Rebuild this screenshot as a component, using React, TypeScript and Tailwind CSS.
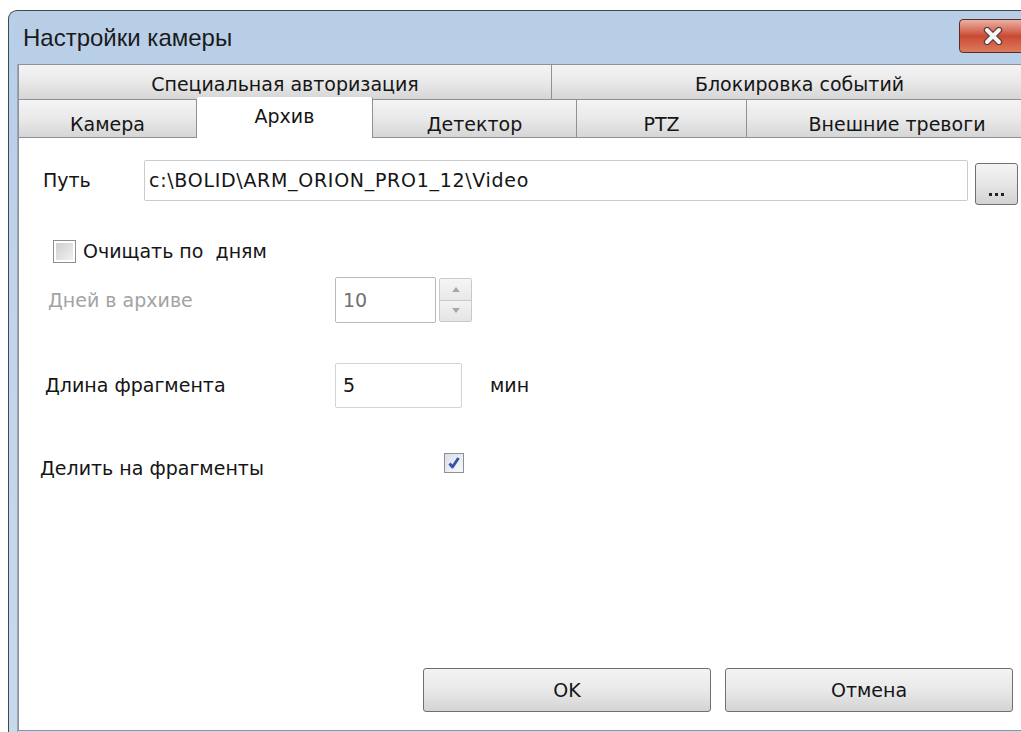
import React from "react";

function BackTab({ label, className }: { label: string; className: string }) {
  return (
    <div
      className={`flex items-center justify-center pt-[5px] border border-[#8e9198] bg-gradient-to-b from-[#f4f4f4] via-[#e9e9e9] to-[#d6d6d6] ${className}`}
    >
      {label}
    </div>
  );
}

function FrontTab({ label, className }: { label: string; className: string }) {
  return (
    <div
      className={`flex items-center justify-center pt-[11px] border-r border-[#8e9198] bg-gradient-to-b from-[#f4f4f4] via-[#e9e9e9] to-[#d6d6d6] ${className}`}
    >
      {label}
    </div>
  );
}

function Checkbox({ checked }: { checked?: boolean }) {
  if (checked) {
    return (
      <div className="w-[20px] h-[20px] border border-[#8f8f8f] bg-gradient-to-br from-[#d9dfec] to-[#f7f8fb] flex items-center justify-center">
        <svg width="14" height="14" viewBox="0 0 14 14">
          <path d="M2.5 7.5 L5.5 11 L11.5 2" fill="none" stroke="#3552a8" strokeWidth="2.8" strokeLinejoin="round" />
        </svg>
      </div>
    );
  }
  return (
    <div className="w-[23px] h-[23px] border border-[#8f8f8f] bg-white p-[2px]">
      <div className="w-full h-full bg-gradient-to-br from-[#cfcfcf] to-[#f1f1f1]" />
    </div>
  );
}

export default function App() {
  return (
    <div className="w-[1021px] h-[732px] overflow-hidden bg-white text-[#151515] text-[19px] font-['DejaVu_Sans',sans-serif]">
      <div className="ml-[8px] mt-[10px] w-[1040px] h-[740px] rounded-tl-[9px] border-l border-t border-[#404850] bg-gradient-to-b from-[#b8cee7] via-[#c2d5ec] to-[#c8d9ec] flex flex-col">
        {/* title bar */}
        <div className="h-[53px] flex items-center justify-between pl-[14px]">
          <span className="text-[24px] text-[#1b1b1b] font-['Liberation_Sans',sans-serif]">Настройки камеры</span>
          <div className="mr-[22px] mt-[-4px] w-[67px] h-[34px] rounded-[4px] border border-[#5b2b28] bg-gradient-to-b from-[#eab0a4] via-[#c94a33] to-[#dc7a5c] flex items-center justify-center">
            <svg width="22" height="18" viewBox="0 0 22 18">
              <path d="M5 3 L17 15 M17 3 L5 15" stroke="#5a3a3a" strokeWidth="6.4" strokeLinecap="round" />
              <path d="M5 3 L17 15 M17 3 L5 15" stroke="#f4f4f4" strokeWidth="4" strokeLinecap="round" />
            </svg>
          </div>
        </div>

        <div className="flex flex-1">
          {/* left frame */}
          <div className="w-[9px] border-r border-[#9aa6b4]" />

          <div className="flex-1 flex flex-col">
            {/* tab rows */}
            <div className="h-[36px] flex">
              <BackTab label="Специальная авторизация" className="w-[534px]" />
              <BackTab label="Блокировка событий" className="flex-1 border-l-0" />
            </div>
            <div className="h-[37px] flex">
              <FrontTab label="Камера" className="w-[179px] border-l" />
              <div className="relative z-10 w-[176px] h-[41px] -mt-[3px] bg-white border-r border-[#8e9198] rounded-t-[2px] flex items-center justify-center pb-[3px]">
                Архив
              </div>
              <FrontTab label="Детектор" className="w-[204px]" />
              <FrontTab label="PTZ" className="w-[170px]" />
              <FrontTab label="Внешние тревоги" className="flex-1" />
            </div>

            {/* page */}
            <div className="h-[594px] bg-white border-t border-l border-b border-[#8e9198] flex flex-col pt-[22px]">
              <div className="h-[45px] flex items-start">
                <span className="ml-[24px] w-[101px] pt-[6px]">Путь</span>
                <div className="w-[824px] h-[41px] border border-[#c9cbcf] rounded-[2px] flex items-center pl-[4px] tracking-[0.7px]">
                  c:\BOLID\ARM_ORION_PRO1_12\Video
                </div>
                <div className="ml-[7px] mt-[3px] w-[43px] h-[42px] rounded-[3px] border border-[#707070] bg-gradient-to-b from-[#f4f4f4] via-[#e6e6e6] to-[#d2d2d2] flex items-end justify-center pb-[8px]">
                  <svg width="15" height="3" viewBox="0 0 15 3">
                    <rect x="0" y="0" width="3" height="3" fill="#222" />
                    <rect x="6" y="0" width="3" height="3" fill="#222" />
                    <rect x="12" y="0" width="3" height="3" fill="#222" />
                  </svg>
                </div>
              </div>

              <div className="mt-[35px] h-[23px] flex items-center">
                <div className="ml-[34px]">
                  <Checkbox />
                </div>
                <span className="ml-[7px]">Очищать по&nbsp; дням</span>
              </div>

              <div className="mt-[14px] h-[46px] flex items-center">
                <span className="ml-[29px] w-[287px] text-[#a3a3a3]">Дней в архиве</span>
                <div className="w-[101px] h-[46px] border border-[#b9b9b9] rounded-[2px] flex items-center pl-[7px] text-[#707070]">
                  10
                </div>
                <div className="ml-[3px] w-[33px] h-[44px] flex flex-col border border-[#c9c9c9] rounded-[2px]">
                  <div className="flex-1 border-b border-[#c9c9c9] bg-gradient-to-b from-[#f6f6f6] to-[#e8e8e8] flex items-center justify-center">
                    <svg width="8" height="5" viewBox="0 0 8 5">
                      <path d="M0 5 L4 0 L8 5 Z" fill="#a8a8a8" />
                    </svg>
                  </div>
                  <div className="flex-1 bg-gradient-to-b from-[#f2f2f2] to-[#e4e4e4] flex items-center justify-center">
                    <svg width="8" height="5" viewBox="0 0 8 5">
                      <path d="M0 0 L8 0 L4 5 Z" fill="#a8a8a8" />
                    </svg>
                  </div>
                </div>
              </div>

              <div className="mt-[40px] h-[45px] flex items-center">
                <span className="ml-[26px] w-[290px]">Длина фрагмента</span>
                <div className="w-[127px] h-[45px] border border-[#d2d4d8] rounded-[2px] flex items-center pl-[7px]">5</div>
                <span className="ml-[28px]">мин</span>
              </div>

              <div className="mt-[45px] h-[20px] flex items-start">
                <span className="ml-[21px] w-[404px] mt-[3px] leading-[24px]">Делить на фрагменты</span>
                <Checkbox checked />
              </div>

              <div className="mt-[195px] flex">
                <button className="ml-[404px] w-[288px] h-[44px] rounded-[3px] border border-[#707070] bg-gradient-to-b from-[#f3f3f3] via-[#e9e9e9] to-[#d4d4d4]">
                  OK
                </button>
                <button className="ml-[14px] w-[288px] h-[44px] rounded-[3px] border border-[#707070] bg-gradient-to-b from-[#f3f3f3] via-[#e9e9e9] to-[#d4d4d4]">
                  Отмена
                </button>
              </div>
            </div>
          </div>
        </div>
      </div>
    </div>
  );
}
